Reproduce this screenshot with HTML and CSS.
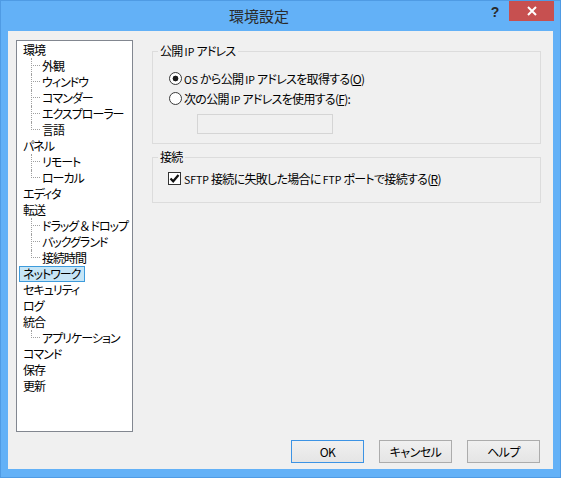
FILE: index.html
```html
<!DOCTYPE html>
<html lang="ja">
<head>
<meta charset="utf-8">
<title>環境設定</title>
<link rel="stylesheet" href="styles.css">
</head>
<body>
<div class="window">
  <div class="titlebar">
    <div class="title">環境設定</div>
    <div class="help">?</div>
    <div class="close">
      <svg width="10" height="10" viewBox="0 0 10 10"><path d="M1 1 L9 9 M9 1 L1 9" stroke="#fff" stroke-width="2" fill="none"/></svg>
    </div>
  </div>
  <div class="client">
    <div class="main">
      <ul class="tree">
        <li><span class="label">環境</span>
          <ul>
            <li><span class="label">外観</span></li>
            <li><span class="label">ウィンドウ</span></li>
            <li><span class="label">コマンダー</span></li>
            <li><span class="label">エクスプローラー</span></li>
            <li><span class="label">言語</span></li>
          </ul>
        </li>
        <li><span class="label">パネル</span>
          <ul>
            <li><span class="label">リモート</span></li>
            <li><span class="label">ローカル</span></li>
          </ul>
        </li>
        <li><span class="label">エディタ</span></li>
        <li><span class="label">転送</span>
          <ul>
            <li><span class="label">ドラッグ ＆ ドロップ</span></li>
            <li><span class="label">バックグランド</span></li>
            <li><span class="label">接続時間</span></li>
          </ul>
        </li>
        <li><span class="label selected">ネットワーク</span></li>
        <li><span class="label">セキュリティ</span></li>
        <li><span class="label">ログ</span></li>
        <li><span class="label">統合</span>
          <ul>
            <li><span class="label">アプリケーション</span></li>
          </ul>
        </li>
        <li><span class="label">コマンド</span></li>
        <li><span class="label">保存</span></li>
        <li><span class="label">更新</span></li>
      </ul>
      <div class="pane">
        <fieldset class="group group-ip">
          <legend><span>公開 <span class="lt">IP</span> アドレス</span></legend>
          <label class="opt"><input class="radio" type="radio" name="ip" checked><span><span class="lt">OS</span> から公開 <span class="lt">IP</span> アドレスを取得する(<u>O</u>)</span></label>
          <label class="opt"><input class="radio" type="radio" name="ip"><span>次の公開 <span class="lt">IP</span> アドレスを使用する(<u>F</u>):</span></label>
          <input class="ipfield" type="text" disabled>
        </fieldset>
        <fieldset class="group group-conn">
          <legend>接続</legend>
          <label class="opt opt-check"><span class="check"><svg width="11" height="11" viewBox="0 0 11 11"><path d="M1.5 5.5 L4.2 8.3 L9.5 2" stroke="#111" stroke-width="2.2" fill="none"/></svg></span><span><span class="lt">SFTP</span> 接続に失敗した場合に <span class="lt">FTP</span> ポートで接続する(<u>R</u>)</span></label>
        </fieldset>
      </div>
    </div>
    <div class="buttons">
      <button class="btn btn-default">OK</button>
      <button class="btn">キャンセル</button>
      <button class="btn">ヘルプ</button>
    </div>
  </div>
</div>
</body>
</html>
```

FILE: styles.css
```css
html, body {
  margin: 0;
  padding: 0;
}

body {
  width: 561px;
  height: 478px;
  overflow: hidden;
  font-family: "Noto Sans CJK JP", sans-serif;
  font-size: 12px;
  color: #000;
  font-feature-settings: "palt";
}

.window {
  box-sizing: border-box;
  width: 561px;
  height: 478px;
  background: #63b1f7;
  border: 1px solid #4f9be4;
  display: flex;
  flex-direction: column;
}

.titlebar {
  flex: none;
  height: 30px;
  display: flex;
  align-items: flex-start;
}

.title {
  flex: 1;
  padding-left: 34px;
  text-align: center;
  font-size: 15px;
  line-height: 30px;
  color: #2a2a2a;
}

.help {
  width: 24px;
  margin-right: 2px;
  text-align: center;
  font-family: "Liberation Sans", sans-serif;
  font-weight: bold;
  font-size: 14px;
  line-height: 22px;
  color: #2a2a2a;
}

.close {
  width: 45px;
  height: 20px;
  margin-right: 6px;
  background: #c75050;
  display: flex;
  align-items: center;
  justify-content: center;
}

.close svg {
  display: block;
}

.client {
  flex: 1;
  margin: 0 7px 8px;
  padding: 9px 12px 6px 8px;
  background: #f0f0f0;
  display: flex;
  flex-direction: column;
}

.main {
  display: flex;
  height: 392px;
}

/* tree */
.tree {
  box-sizing: border-box;
  width: 117px;
  height: 392px;
  margin: 0;
  padding: 1px 0 0;
  list-style: none;
  background: #fff;
  border: 1px solid #828790;
  flex: none;
  overflow: hidden;
  letter-spacing: -1px;
}

.tree ul {
  margin: 0;
  padding: 0;
  list-style: none;
}

.tree li {
  display: block;
  margin: 0;
  padding: 0;
}

.label {
  display: block;
  width: fit-content;
  box-sizing: border-box;
  height: 16px;
  line-height: 14px;
  margin-left: 2px;
  padding: 0 4px 0 3px;
  border: 1px solid transparent;
  white-space: nowrap;
}

.label.selected {
  background: #c6e5f6;
  border-color: #3d9bdc;
}

.tree ul > li {
  position: relative;
  padding-left: 19px;
  height: 16px;
}

.tree ul > li::before {
  content: "";
  position: absolute;
  left: 14px;
  top: 0;
  height: 16px;
  border-left: 1px dotted #a0a0a0;
}

.tree ul > li:last-child::before {
  height: 8px;
}

.tree ul > li::after {
  content: "";
  position: absolute;
  left: 16px;
  top: 7px;
  width: 7px;
  border-top: 1px dotted #a0a0a0;
}

/* right pane */
.pane {
  flex: 1;
  margin-left: 19px;
  padding-top: 4px;
  display: flex;
  flex-direction: column;
  letter-spacing: -0.7px;
}

.group {
  margin: 0;
  padding: 0;
  border: 1px solid #dcdcdc;
  min-width: 0;
}

.group legend {
  margin-left: 5px;
  padding: 0 2px;
  line-height: 14px;
  font-size: 12px;
}

.group-ip {
  padding-top: 9px;
  padding-bottom: 9px;
}

.group-conn {
  margin-top: 6px;
  padding-top: 4px;
  padding-bottom: 14px;
}

.lt {
  font-size: 10.5px;
  letter-spacing: 0;
}

.opt {
  display: flex;
  align-items: center;
  height: 20px;
  white-space: nowrap;
}

.radio {
  appearance: none;
  -webkit-appearance: none;
  box-sizing: border-box;
  flex: none;
  width: 13px;
  height: 13px;
  margin: 0 2px 0 16px;
  border: 1px solid #3a3a3a;
  border-radius: 50%;
  background: #fff;
}

.radio:checked {
  background: radial-gradient(circle, #1a1a1a 0, #1a1a1a 2.6px, #fff 3.2px);
}

.ipfield {
  box-sizing: border-box;
  display: block;
  width: 136px;
  height: 20px;
  margin: 6px 0 0 44px;
  border: 1px solid #d5d5d5;
  background: #f0f0f0;
  padding: 0;
}

.check {
  box-sizing: border-box;
  flex: none;
  width: 13px;
  height: 13px;
  margin: 0 3px 0 15px;
  border: 1px solid #333;
  background: #fff;
  display: flex;
  align-items: center;
  justify-content: center;
}

.check svg {
  display: block;
}

/* buttons */
.buttons {
  margin-top: 8px;
  margin-right: 1px;
  display: flex;
  justify-content: flex-end;
  gap: 15px;
}

.btn {
  box-sizing: border-box;
  width: 73px;
  height: 23px;
  margin: 0;
  padding: 0;
  font-family: "Noto Sans CJK JP", sans-serif;
  font-size: 12px;
  font-feature-settings: "palt";
  letter-spacing: -0.5px;
  color: #000;
  border: 1px solid #acacac;
  background: linear-gradient(#f0f0f0, #e5e5e5);
}

.btn-default {
  border-color: #3c93e4;
}
```
